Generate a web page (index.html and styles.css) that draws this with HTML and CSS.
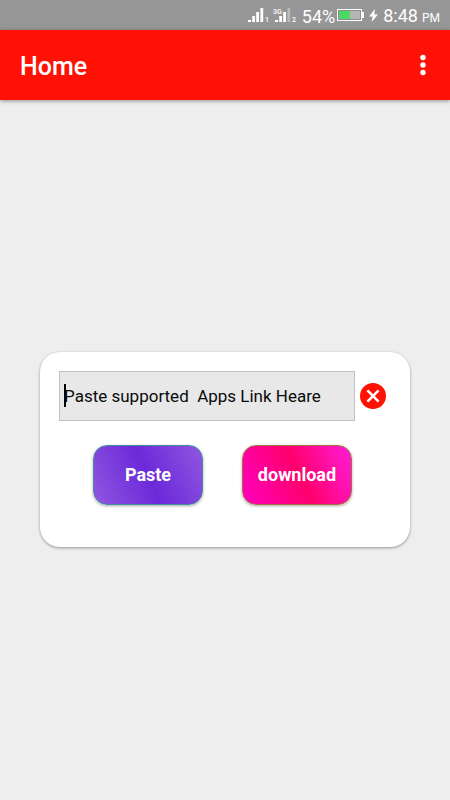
FILE: index.html
```html
<!DOCTYPE html>
<html lang="en">
<head>
<meta charset="utf-8">
<meta name="viewport" content="width=device-width, initial-scale=1">
<title>Home</title>
<link rel="stylesheet" href="styles.css">
</head>
<body>
<div class="status">
  <svg class="signals" width="50" height="18" viewBox="0 0 50 18" aria-hidden="true">
    <g fill="#fff">
      <rect x="0" y="13" width="3" height="2"/>
      <rect x="4.2" y="9" width="2.8" height="6"/>
      <rect x="8.2" y="5" width="2.8" height="10"/>
      <rect x="12.4" y="1" width="2.8" height="14"/>
      <rect x="27" y="13" width="3" height="2"/>
      <rect x="31.2" y="9" width="2.8" height="6"/>
      <rect x="35.2" y="5" width="2.8" height="10"/>
      <rect x="39.4" y="1" width="2.8" height="14" opacity=".35"/>
      <text x="17" y="15" class="tiny">1</text>
      <text x="44" y="15" class="tiny">2</text>
      <text x="25" y="7" class="tiny">3G</text>
    </g>
  </svg>
  <span class="percent">54%</span>
  <svg width="27" height="14" viewBox="0 0 27 14" aria-hidden="true">
    <rect x="0" y="0" width="25" height="12" fill="#fff"/>
    <rect x="25" y="3" width="2" height="6" fill="#fff"/>
    <rect x="1" y="1" width="23" height="10" fill="#8c8c8c"/>
    <rect x="2" y="2" width="21" height="8" fill="#b5b5b5"/>
    <rect x="2" y="2" width="11" height="8" fill="#4bd964"/>
  </svg>
  <svg class="bolt" width="9" height="14" viewBox="0 0 9 14" aria-hidden="true">
    <path d="M6 0 0 7.6h3.6L2.6 13 9 5.4H5.3z" fill="#fff"/>
  </svg>
  <span class="clock">8:48 <small>PM</small></span>
</div>
<header class="appbar">
  <h1>Home</h1>
  <button class="menu" type="button" aria-label="More options">
    <svg width="6" height="22" viewBox="0 0 6 22" fill="#fff">
      <circle cx="3" cy="3.5" r="2.7"/>
      <circle cx="3" cy="11" r="2.7"/>
      <circle cx="3" cy="18.5" r="2.7"/>
    </svg>
  </button>
</header>
<main>
  <form class="card">
    <div class="field-row">
      <div class="field">
        <input type="text" aria-label="Link" placeholder="Paste supported  Apps Link Heare">
        <span class="caret"></span>
      </div>
      <button class="clear" type="button" aria-label="Clear">
        <svg width="26" height="26" viewBox="0 0 26 26">
          <circle cx="13" cy="13" r="13" fill="#ff1205"/>
          <path d="M7.4 7.4 18.6 18.6M18.6 7.4 7.4 18.6" stroke="#fff" stroke-width="2.6" fill="none"/>
        </svg>
      </button>
    </div>
    <div class="actions">
      <button class="action paste" type="button">Paste</button>
      <button class="action download" type="button">download</button>
    </div>
  </form>
</main>
</body>
</html>
```
FILE: styles.css
```css
* {
  box-sizing: border-box;
}

body {
  margin: 0;
  min-height: 100vh;
  display: flex;
  flex-direction: column;
  background: #eee;
  font-family: Roboto, sans-serif;
}

button {
  border: 0;
  padding: 0;
  background: none;
  font-family: inherit;
}

svg {
  display: block;
}

.status {
  display: flex;
  align-items: center;
  justify-content: flex-end;
  height: 30px;
  padding: 2px 10px 0 0;
  background: #969696;
  color: #fff;
  font-size: 18px;
  line-height: 24px;
}

.signals {
  margin-right: 4px;
}

.tiny {
  font-size: 7px;
  font-weight: 500;
}

.percent,
.clock {
  padding-top: 2px;
}

.percent {
  margin-right: 2px;
}

.bolt {
  margin: 0 5px;
}

.clock {
  display: flex;
  align-items: baseline;
  gap: 4px;
}

.clock small {
  font-size: 12px;
}

.appbar {
  display: flex;
  align-items: center;
  justify-content: space-between;
  height: 70px;
  padding: 0 16px 0 20px;
  background: #ff1205;
  box-shadow: 0 1px 4px rgba(0, 0, 0, 0.4);
}

.appbar h1 {
  margin: 0;
  padding-top: 2px;
  color: #fff;
  font-size: 25px;
  font-weight: 500;
}

.menu {
  padding: 8px;
}

main {
  flex: 1;
  display: flex;
  align-items: center;
  padding: 0 40px 2px;
}

.card {
  flex: 1;
  padding: 19px 24px 42px 19px;
  border-radius: 20px;
  background: #fff;
  box-shadow: 0 1px 3px rgba(0, 0, 0, 0.38);
}

.field-row {
  display: flex;
  align-items: center;
  gap: 5px;
}

.field {
  position: relative;
  flex: 1;
}

.field input {
  display: block;
  width: 100%;
  height: 50px;
  padding: 0 4px;
  border: 1px solid #c2c2c2;
  border-radius: 0;
  background: #e8e8e8;
  color: #000;
  font-family: inherit;
  font-size: 17px;
  outline: 0;
}

.field input::placeholder {
  color: #0a0a0a;
  opacity: 1;
}

.caret {
  position: absolute;
  left: 5px;
  top: 13px;
  width: 2px;
  height: 23px;
  background: #000;
}

.actions {
  display: flex;
  justify-content: center;
  gap: 39px;
  margin-top: 24px;
}

.action {
  width: 110px;
  height: 60px;
  border: 1px solid;
  border-radius: 14px;
  color: #fff;
  font-size: 18px;
  font-weight: 700;
  box-shadow: 0 1px 3px rgba(0, 0, 0, 0.35);
}

.paste {
  border-color: #3f8f9c;
  background: linear-gradient(65deg, #9058e0, #6c29d9 50%, #9058e0) border-box;
}

.download {
  border-color: #a8703c;
  background: linear-gradient(65deg, #ff00c0, #ff006c 52%, #ff1ddc) border-box;
}
```
